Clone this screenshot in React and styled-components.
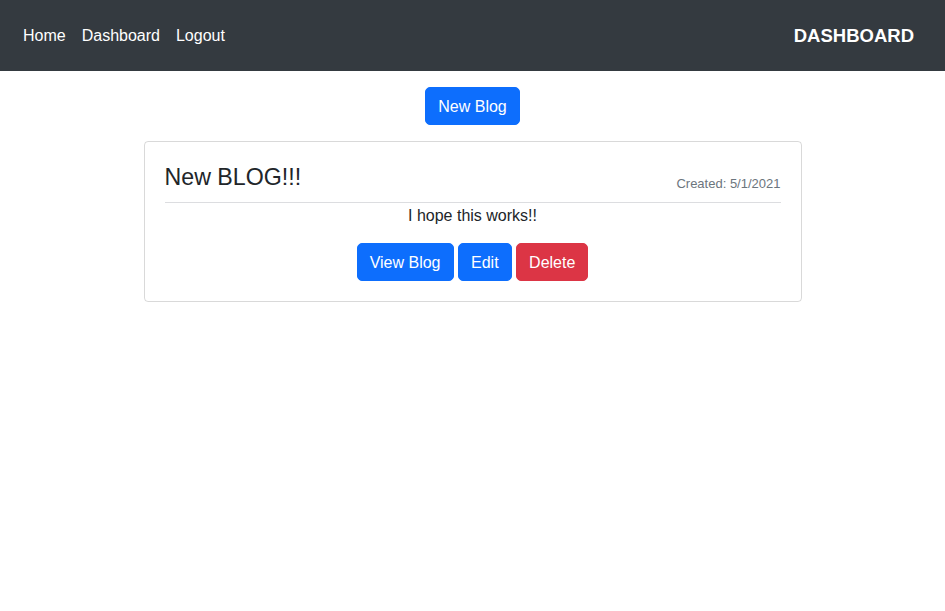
import React from 'react';
import styled, { createGlobalStyle } from 'styled-components';

const GlobalStyle = createGlobalStyle`
  body {
    margin: 0;
    font-family: "Liberation Sans", Arial, sans-serif;
    font-size: 16px;
    line-height: 1.5;
    color: #212529;
    background: #fff;
  }
  * { box-sizing: border-box; }
`;

const Navbar = styled.nav`
  display: flex;
  align-items: center;
  justify-content: space-between;
  height: 71px;
  padding: 0 31px 0 15px;
  background: #343a40;
`;

const NavLinks = styled.div`
  display: flex;
`;

const NavLink = styled.a`
  padding: 8px;
  color: #fff;
  text-decoration: none;
  cursor: pointer;
`;

const Brand = styled.a`
  color: #fff;
  font-size: 18.5px;
  font-weight: bold;
  text-decoration: none;
`;

const Main = styled.main`
  display: flex;
  flex-direction: column;
  align-items: center;
  padding-top: 16px;
`;

const Button = styled.button`
  padding: 7px 12px 5px;
  border: 1px solid ${p => (p.$danger ? '#dc3545' : '#0d6efd')};
  border-radius: 5px;
  background: ${p => (p.$danger ? '#dc3545' : '#0d6efd')};
  color: #fff;
  font-family: inherit;
  font-size: 16px;
  line-height: 1.5;
  cursor: pointer;
`;

const Card = styled.article`
  width: 658px;
  margin-top: 16px;
  padding: 20px;
  border: 1px solid rgba(0, 0, 0, 0.15);
  border-radius: 4px;
`;

const CardHeader = styled.header`
  display: flex;
  justify-content: space-between;
  align-items: flex-end;
  height: 30px;
  padding-top: 2px;
  margin-bottom: 10px;
`;

const Title = styled.h4`
  margin: 0;
  font-size: 23.2px;
  font-weight: 500;
  line-height: 1.2;
`;

const Created = styled.small`
  font-size: 13px;
  color: #6c757d;
  line-height: 1.2;
  padding-bottom: 0;
`;

const Divider = styled.hr`
  margin: 0;
  border: 0;
  border-top: 1px solid #dcdde0;
`;

const Body = styled.p`
  margin: 0 0 16px;
  padding-top: 1px;
  height: 24px;
  text-align: center;
`;

const Actions = styled.div`
  display: flex;
  justify-content: center;
  gap: 4.5px;
`;

export default function App() {
  return (
    <>
      <GlobalStyle />
      <Navbar>
        <NavLinks>
          <NavLink>Home</NavLink>
          <NavLink>Dashboard</NavLink>
          <NavLink>Logout</NavLink>
        </NavLinks>
        <Brand>DASHBOARD</Brand>
      </Navbar>
      <Main>
        <Button>New Blog</Button>
        <Card>
          <CardHeader>
            <Title>New BLOG!!!</Title>
            <Created>Created: 5/1/2021</Created>
          </CardHeader>
          <Divider />
          <Body>I hope this works!!</Body>
          <Actions>
            <Button>View Blog</Button>
            <Button>Edit</Button>
            <Button $danger>Delete</Button>
          </Actions>
        </Card>
      </Main>
    </>
  );
}
